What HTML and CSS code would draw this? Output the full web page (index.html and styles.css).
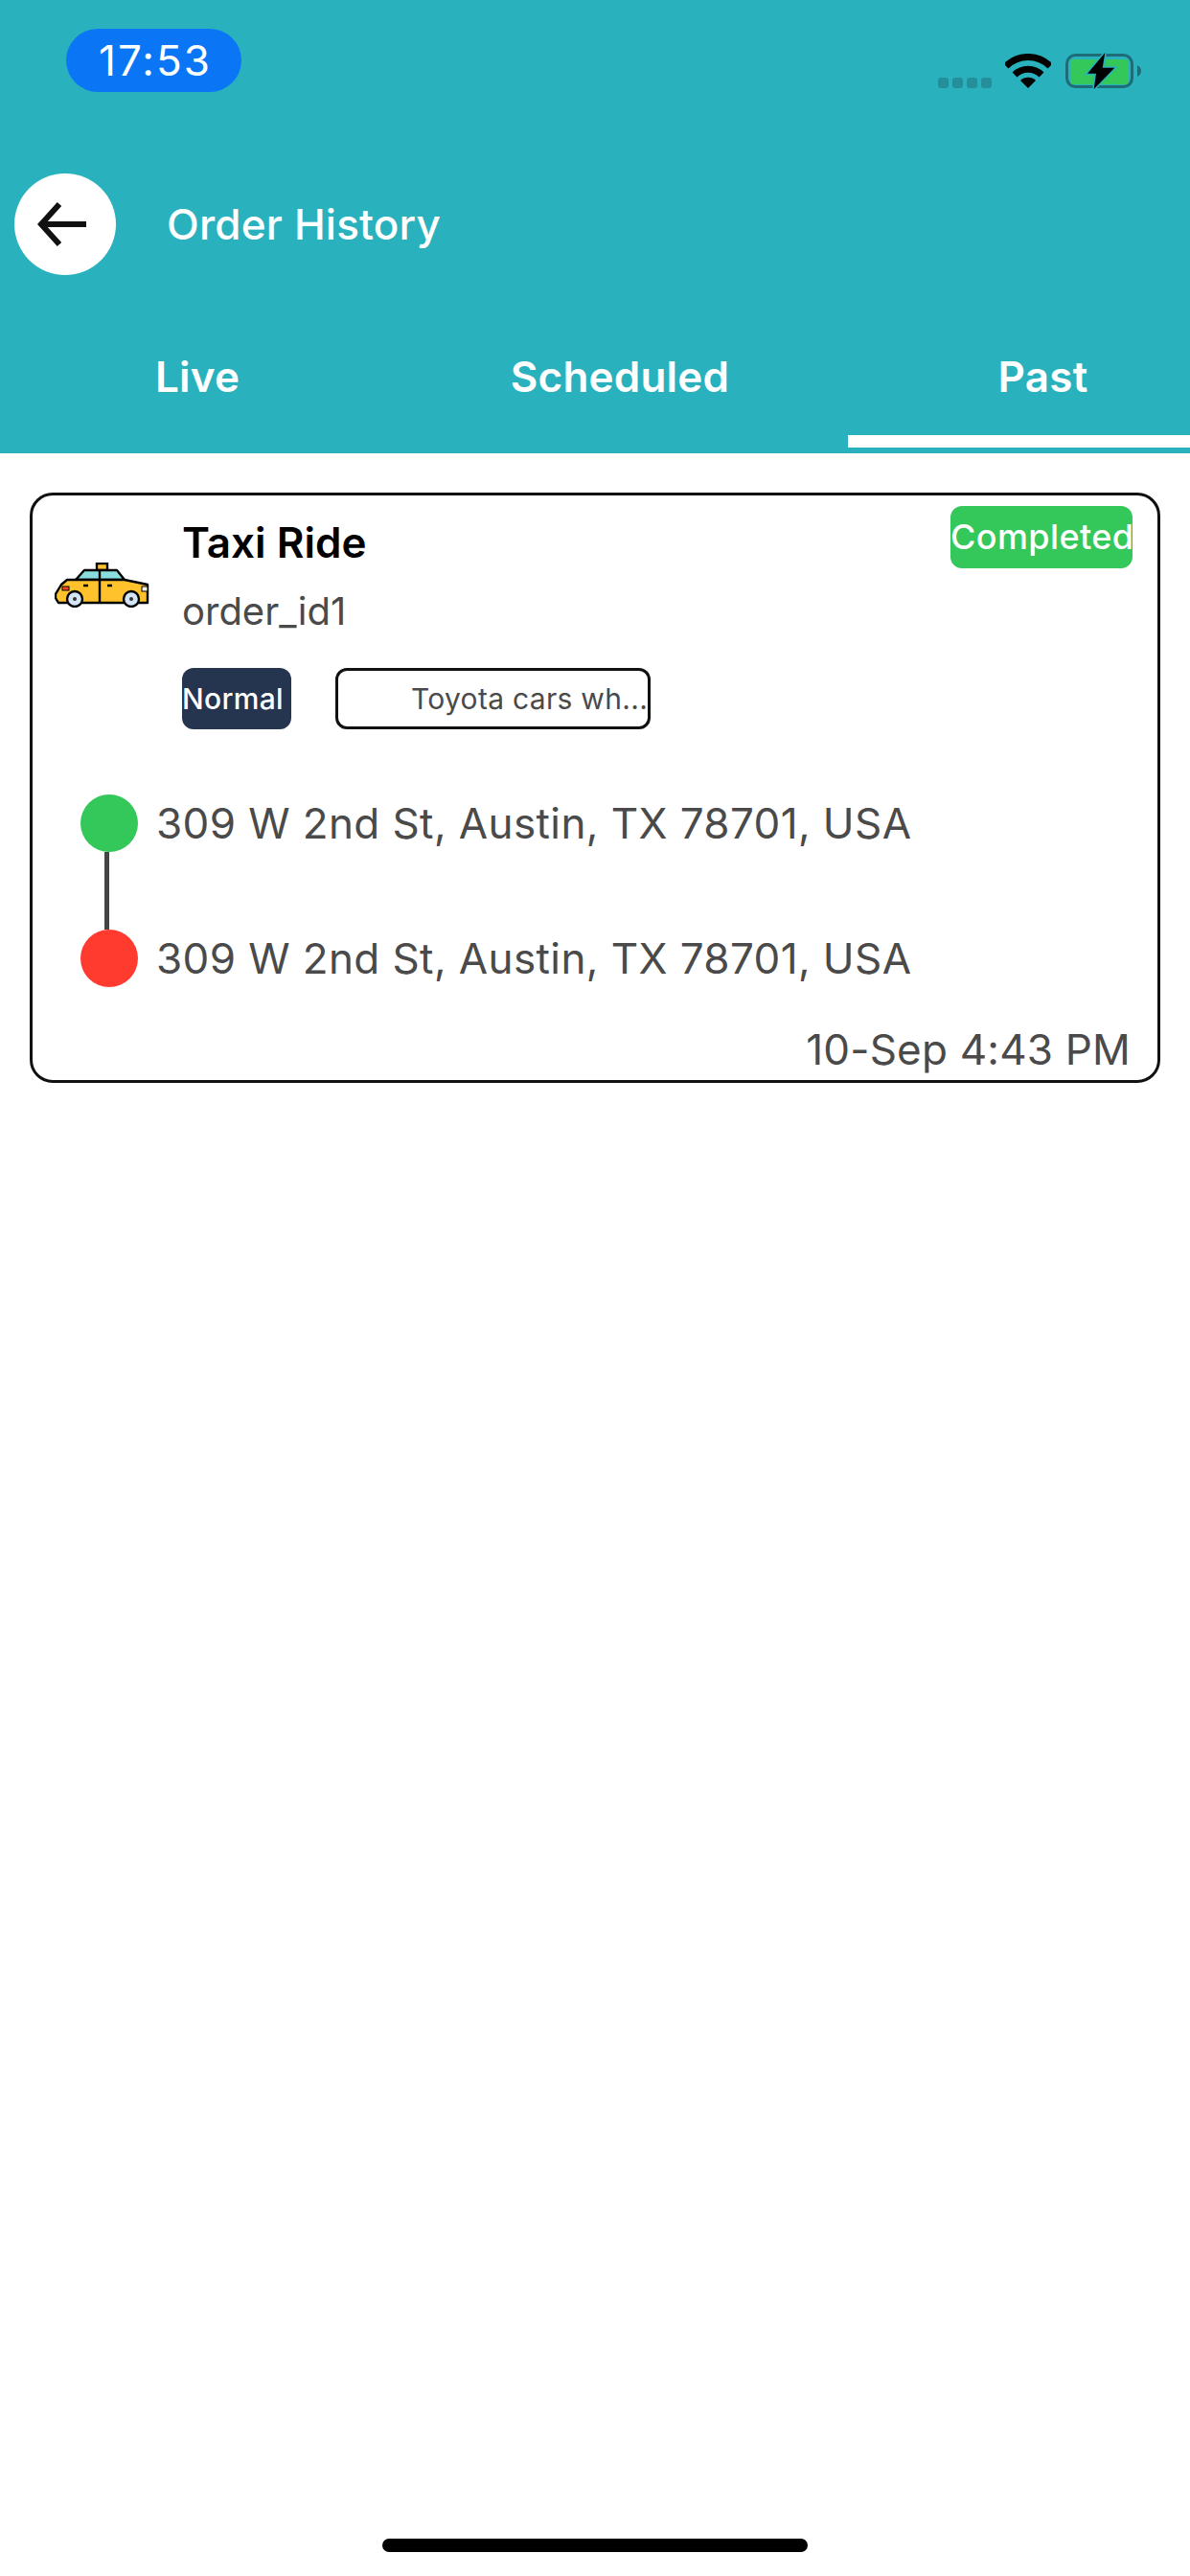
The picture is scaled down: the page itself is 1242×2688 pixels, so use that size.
FILE: index.html
```html
<!DOCTYPE html><html lang="en">
<head>
  <meta charset="UTF-8" />
  <meta name="viewport" content="width=device-width, initial-scale=1.0" />
  <title>Order History</title>
  <link rel="stylesheet" href="styles.css">
</head>
<body>
  <div class="page">
    <header class="appbar">
      <div class="status-bar">
        <div class="time-pill">17:53</div>
        <div class="status-icons">
          <div class="signal"><span></span><span></span><span></span><span></span></div>
          <svg class="wifi" width="48" height="36" viewBox="0 0 48 36">
            <path d="M1 13 A32.5 32.5 0 0 1 47 13" fill="none" stroke="#000" stroke-width="7" />
            <path d="M10 22 A20 20 0 0 1 38 22" fill="none" stroke="#000" stroke-width="7" />
            <path d="M24 36 L16 28 A11.3 11.3 0 0 1 32 28 Z" fill="#000" />
          </svg>
          <svg class="battery" width="79" height="38" viewBox="0 0 79 38">
            <rect x="1.5" y="2.5" width="68" height="33" rx="9" fill="none" stroke="#1d6c78" stroke-width="3" />
            <rect x="5" y="7" width="61" height="26" rx="3" fill="#34c759" />
            <path d="M75 13 Q79 15 79 19 Q79 23 75 25 Z" fill="#1d6c78" />
            <path d="M41.3 0 L23 21.7 L32 21.7 L29.7 38 L51.3 15.7 L38.7 15.7 Z" fill="#000" stroke="#29b2be" stroke-width="3" paint-order="stroke" />
          </svg>
        </div>
      </div>
      <div class="toolbar">
        <button class="back-btn">
          <svg width="52" height="48" viewBox="0 0 52 48">
            <path d="M4 24 H51 M23 3 L4 24 L23 45" fill="none" stroke="#111" stroke-width="6" />
          </svg>
        </button>
        <div class="toolbar-title">Order History</div>
      </div>
      <div class="tabs">
        <div class="tab tab-live">Live</div>
        <div class="tab tab-scheduled">Scheduled</div>
        <div class="tab tab-past active">Past</div>
      </div>
    </header>

    <main class="content">
      <div class="card">
        <div class="card-top">
          <svg class="taxi" width="99" height="47" viewBox="0 0 99 47">
            <rect x="44" y="1" width="11" height="7" fill="#ffc22d" stroke="#000" stroke-width="2.4" />
            <path d="M22 18 L31 8 L65 8 L73 18 Z" fill="#8adede" stroke="#000" stroke-width="2.4" stroke-linejoin="round" />
            <path d="M1 33 L7 23 L13 18 L73 18 L97 23 L97 42 L4 42 L1 37 Z" fill="#ffc22d" stroke="#000" stroke-width="2.4" stroke-linejoin="round" />
            <path d="M47 8 V42" stroke="#000" stroke-width="2.4" />
            <path d="M30 24 H35 M55 24 H60" stroke="#000" stroke-width="2.4" />
            <rect x="8" y="25" width="7" height="4" fill="#f04a2e" stroke="#000" stroke-width="1" />
            <rect x="91" y="25" width="6" height="5" fill="#f3f3e4" stroke="#000" stroke-width="1" />
            <circle cx="21" cy="38" r="8" fill="#d5e5f8" stroke="#000" stroke-width="2.4" />
            <circle cx="80" cy="38" r="8" fill="#d5e5f8" stroke="#000" stroke-width="2.4" />
            <circle cx="21" cy="38" r="2" fill="#333" />
            <circle cx="80" cy="38" r="2" fill="#333" />
          </svg>
          <div class="order-info">
            <div class="order-title">Taxi Ride</div>
            <div class="order-id">order_id1</div>
            <div class="order-tags">
              <span class="tag tag-normal">Normal</span>
              <span class="tag tag-car">Toyota cars wh...</span>
            </div>
          </div>
          <div class="status-badge">Completed</div>
        </div>

        <div class="route">
          <div class="route-row">
            <span class="dot dot-green"></span>
            <span class="address">309 W 2nd St, Austin, TX 78701, USA</span>
          </div>
          <div class="route-line"></div>
          <div class="route-row">
            <span class="dot dot-red"></span>
            <span class="address">309 W 2nd St, Austin, TX 78701, USA</span>
          </div>
        </div>

        <div class="order-date">10-Sep 4:43 PM</div>
      </div>
    </main>

    <div class="home-indicator"></div>
  </div>
</body>
</html>
```

FILE: styles.css
```css
* { box-sizing: border-box; }
body { margin: 0; background: #fff; font-family: Inter, "Liberation Sans", sans-serif; }
.page { width: 1242px; height: 2688px; display: flex; flex-direction: column; overflow: hidden; }

.appbar { height: 473px; background: #29b2be; color: #fff; padding-bottom: 6px; }
.status-bar { height: 96px; padding: 30px 51px 0 69px; display: flex; justify-content: space-between; align-items: flex-start; }
.time-pill { width: 183px; height: 66px; padding-left: 3px; border-radius: 33px; background: #0a76f6; font-size: 44px; letter-spacing: 2px; line-height: 66px; text-align: center; }
.status-icons { display: flex; align-items: flex-end; margin-top: 25px; }
.signal { display: flex; gap: 4px; margin-bottom: 1px; }
.signal span { width: 11px; height: 11px; border-radius: 3px; background: #248f9a; }
.wifi { margin-left: 14px; margin-bottom: 1px; }
.battery { margin-left: 15px; }

.toolbar { height: 106px; margin-top: 85px; display: flex; align-items: center; padding-left: 15px; }
.back-btn { width: 106px; height: 106px; border: none; border-radius: 50%; background: #fff; padding: 0 6px 0 0; display: flex; align-items: center; justify-content: center; }
.toolbar-title { margin-left: 53px; font-size: 44px; font-weight: 500; letter-spacing: 0.2px; }

.tabs { display: flex; height: 180px; align-items: flex-end; }
.tab { height: 120px; font-size: 44px; font-weight: 600; letter-spacing: 0.2px; line-height: 92px; text-align: center; }
.tab-live { width: 412px; }
.tab-scheduled { width: 470px; margin-right: 3px; }
.tab-past { width: 357px; padding-left: 50px; }
.tab.active { border-bottom: 13px solid #fff; }

.content { padding: 41px 31px 0; }
.card { height: 616px; border: 3px solid #111; border-radius: 24px; background: #fff; }
.card-top { display: flex; align-items: flex-start; padding: 11px 26px 0 23px; }
.taxi { margin-top: 59px; flex-shrink: 0; }
.order-info { margin-left: 34px; flex: 1; }
.order-title { font-size: 44px; font-weight: 600; line-height: 76px; color: #000; }
.order-id { margin-top: 8px; font-size: 40px; line-height: 52px; color: #4a4a4a; }
.order-tags { margin-top: 33px; display: flex; gap: 46px; }
.tag { height: 64px; border-radius: 12px; font-size: 30px; line-height: 58px; }
.tag-normal { width: 114px; background: #25344f; color: #fff; font-weight: 500; letter-spacing: 0.3px; line-height: 64px; white-space: nowrap; }
.tag-car { width: 329px; border: 3px solid #111; padding-left: 76px; color: #4a4a4a; letter-spacing: 0.3px; white-space: nowrap; }
.status-badge { width: 190px; height: 65px; border-radius: 12px; background: #34c759; color: #fff; font-size: 36px; font-weight: 500; letter-spacing: 0.4px; line-height: 65px; text-align: center; white-space: nowrap; }

.route { margin-top: 68px; padding-left: 50px; }
.route-row { display: flex; align-items: center; height: 60px; }
.dot { width: 60px; height: 60px; border-radius: 50%; flex-shrink: 0; }
.dot-green { background: #34c759; }
.dot-red { background: #ff3b30; }
.address { margin-left: 19px; font-size: 44px; letter-spacing: 0.4px; line-height: 62px; color: #4a4a4a; white-space: nowrap; }
.route-line { width: 5px; height: 81px; margin-left: 25px; background: #444; }

.order-date { margin-top: 35px; padding-right: 28px; font-size: 44px; letter-spacing: 0.2px; line-height: 60px; color: #4a4a4a; text-align: right; }

.home-indicator { width: 444px; height: 14px; margin: auto auto 25px; border-radius: 7px; background: #000; }
```
